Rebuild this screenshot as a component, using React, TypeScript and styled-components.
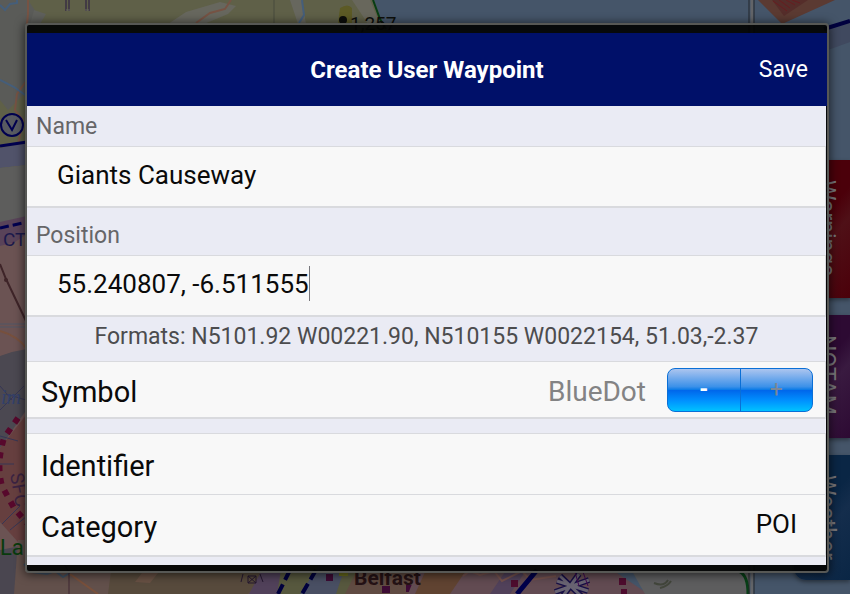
import React, { useState } from "react";
import styled, { createGlobalStyle } from "styled-components";

const GlobalStyle = createGlobalStyle`
  * { box-sizing: border-box; }
  body { margin: 0; background: #455569; font-family: Roboto, "Liberation Sans", sans-serif; color: #0a0a0a; }
  button, input, select { font: inherit; color: inherit; margin: 0; }
`;

const Page = styled.main`
  position: relative;
  min-height: 100vh;
  padding: 23px 21px 21px 25px;
  overflow: hidden;
`;

const MapCanvas = styled.svg`
  position: absolute;
  inset: 0;
  width: 100%;
  height: 100%;
`;

const SideTabs = styled.nav`
  position: absolute;
  top: 160px;
  right: 0;
  display: flex;
  flex-direction: column;
  gap: 17px;
`;

const SideTab = styled.button<{ $tone: string; $edge: string; $height: number }>`
  width: 56px;
  height: ${(p) => p.$height}px;
  padding: 20px 12px 0 0;
  border: 0;
  border-radius: 12px 0 0 12px;
  display: flex;
  justify-content: flex-end;
  align-items: flex-start;
  background: linear-gradient(130deg, ${(p) => p.$edge} 45%, ${(p) => p.$tone} 60%, ${(p) => p.$edge} 100%);
  box-shadow: 0 2px 4px rgba(0, 0, 0, 0.4);
  color: #77767a;
  font-size: 23px;
  line-height: 24px;
`;

const SideLabel = styled.span`
  writing-mode: vertical-rl;
`;

const Dialog = styled.form`
  position: relative;
  display: flex;
  flex-direction: column;
  padding: 8px 0 6px;
  border: 2px solid #575855;
  border-radius: 4px;
  background: rgba(3, 4, 4, 0.94);
  box-shadow: 0 1px 10px 1px rgba(0, 0, 0, 0.6);
`;

const Header = styled.header`
  display: grid;
  grid-template-columns: 1fr auto 1fr;
  align-items: center;
  height: 73px;
  padding: 0 19px;
  background: #001069;
  color: #ffffff;
`;

const Title = styled.h1`
  grid-column: 2;
  margin: 0;
  font-size: 24px;
  line-height: 32px;
  font-weight: 700;
`;

const SaveButton = styled.button`
  justify-self: end;
  padding: 0;
  border: 0;
  background: none;
  font-size: 23px;
  line-height: 32px;
`;

const Body = styled.div`
  margin-right: 1px;
  padding-bottom: 8px;
  background: #eaebf4;
`;

const SectionLabel = styled.label<{ $height: number }>`
  display: flex;
  align-items: flex-end;
  height: ${(p) => p.$height}px;
  padding: 0 9px 5px;
  color: #666668;
  font-size: 23px;
  line-height: 28px;
`;

const Row = styled.div<{ $height: number; $inset?: number; $joined?: boolean }>`
  display: flex;
  align-items: center;
  height: ${(p) => p.$height}px;
  padding: 0 12px 0 ${(p) => p.$inset ?? 14}px;
  border: solid #d9dade;
  border-width: 1px 1px ${(p) => (p.$joined ? 1 : 2)}px 0;
  background: #f8f8f8;

  & + & {
    border-top: 0;
  }
`;

const TextInput = styled.input<{ $fit?: boolean }>`
  ${(p) => (p.$fit ? "field-sizing: content;" : "flex: 1; min-width: 0;")}
  padding: 0 0 4px;
  border: 0;
  outline: 0;
  background: none;
  font-size: 26px;
  line-height: 34px;
`;

const Caret = styled.span`
  width: 1px;
  height: 35px;
  margin-bottom: 5px;
  background: #77777c;
`;

const Hint = styled.p`
  margin: 0;
  padding: 6px 0 10px;
  text-align: center;
  color: #4c4c4e;
  font-size: 23px;
  line-height: 28px;
`;

const RowLabel = styled.label`
  padding-top: 4px;
  font-size: 29px;
  line-height: 36px;
`;

const SymbolName = styled.output`
  margin-left: auto;
  margin-right: 21px;
  padding-top: 4px;
  color: #838384;
  font-size: 28px;
  line-height: 36px;
`;

const Stepper = styled.div`
  display: flex;
  width: 146px;
  height: 44px;
  border: 1px solid #0a6fd6;
  border-radius: 8px;
  overflow: hidden;
  background: linear-gradient(#acc5ef 0%, #3c91e9 42%, #0679e7 50%, #0067eb 51%, #0092ff 76%, #00c2ff 100%);
`;

const StepButton = styled.button<{ $dim?: boolean }>`
  flex: 1;
  padding: 0;
  border: 0;
  background: none;
  color: ${(p) => (p.$dim ? "#7b8898" : "#ffffff")};
  font-size: 23px;
  font-weight: ${(p) => (p.$dim ? 400 : 700)};
  line-height: 40px;

  & + & {
    border-left: 1px solid #0a6fd6;
  }
`;

const Spacer = styled.div`
  height: 14px;
`;

const CategorySelect = styled.select`
  appearance: none;
  field-sizing: content;
  margin-left: auto;
  padding: 0 16px 2px 0;
  border: 0;
  outline: 0;
  background: none;
  text-align-last: right;
  font-size: 26px;
  line-height: 34px;
`;

function Chart() {
  return (
    <MapCanvas viewBox="0 0 850 594" preserveAspectRatio="xMidYMid slice" aria-hidden="true">
      <rect width="850" height="594" fill="#455569" />
      <path d="M0 0H374L382 22 400 60V240H0z" fill="#5f6048" />
      <path d="M0 0H28L36 12 34 40 28 90 8 110 0 100z" fill="#5a5b58" />
      <path d="M34 10l12 4-6 10H30z" fill="#5f605c" />
      <path d="M168 24l18-12 34-10 16 4-8 8-24 10zM290 0h12l4 24h-8z" fill="#67675e" />
      <path d="M352 0h18l10 24h-12z" fill="#68675c" />
      <path d="M340 8q8-5 12 0v15h-14z" fill="#5c5a25" />
      <path d="M373 0l7 19 6 10" fill="none" stroke="#083d14" strokeWidth="2" />
      <path d="M28 0v14l-1 10M196 23l14-10 15-4 6-9M27 80l-10 14-2 16 8 10-6 30M10 155l18-6M12 155l12 34v40" fill="none" stroke="#765344" strokeWidth="2" />
      <path d="M0 5l5 5 5-6 7-1V0M302 0l2 15-5 8M0 80l14 7 14 10M0 214l14-4 8 4h6" fill="none" stroke="#455e7a" strokeWidth="2" />
      <path d="M66 0v11M86 0v11M69 0v11M89 0v11" stroke="#261640" strokeWidth="1" />
      <path d="M66 10h4M85 10h4" stroke="#67675e" />
      <path d="M274 0v24" stroke="#484a3c" />

      <path d="M0 148l27-5v22l-27 3z" fill="#51536a" />
      <path d="M0 168l27-3v58l-27 5z" fill="#5d5d5c" />
      <path d="M0 228l27-6v350H0z" fill="#6b5353" />
      <path d="M0 222l27-6v18l-12 8-15 4z" fill="#594359" />
      <circle cx="12" cy="125" r="11" fill="#585a61" stroke="#00004f" strokeWidth="2" />
      <path d="M6 120l6 10 5-10" fill="none" stroke="#00004f" strokeWidth="2" />
      <path d="M0 146l27-4" stroke="#00004f" strokeWidth="3" />
      <path d="M0 228l27-6" stroke="#00004f" strokeWidth="3" strokeDasharray="9 4" />
      <text x="3" y="246" fontFamily="Roboto, sans-serif" fontSize="19" fill="#1b194c">CT</text>
      <path d="M0 264l6 15 21 44" fill="none" stroke="#3e2428" strokeWidth="2" />
      <circle cx="6" cy="280" r="2" fill="#3e2428" />
      <path d="M0 324h27M0 327h27" stroke="#505767" />
      <path d="M0 331q18 5 27 18" fill="none" stroke="#77503d" strokeWidth="2" />
      <path d="M0 356l12-4 15-3v60L0 448z" fill="#4b4851" />
      <path d="M0 448l27-34v138l-27-30z" fill="#663f3f" />
      <path d="M0 410l24-24M0 386l12 14M6 394l20 6M0 436l18 5M0 464h14M2 524l18-18M10 530l17-14" stroke="#363654" />
      <text x="1" y="404" fontFamily="Liberation Serif, serif" fontStyle="italic" fontSize="20" fill="#32406a">im</text>
      <path d="M18 418L4 438Q-4 464 2 486L14 508 28 524" fill="none" stroke="#57082c" strokeWidth="6" strokeDasharray="6 7" />
      <text transform="translate(10 474) rotate(80)" fontFamily="Roboto, sans-serif" fontSize="19" fill="#3b2342">SFC</text>

      <path d="M0 550l20-4v48H0z" fill="#4a4650" />
      <path d="M18 540H280V594H14z" fill="#62504b" />
      <text x="0" y="555" fontFamily="Roboto, sans-serif" fontSize="22" fill="#083b0d">La</text>
      <path d="M112 564H280L248 594H108z" fill="#574a3c" />
      <path d="M145 569l13 4-8 10-15-1z" fill="#685144" />
      <path d="M24 564l8 8 15 2 8-3 8 6 8-5" fill="none" stroke="#405163" strokeWidth="2" />
      <path d="M64 564l5 8v22" fill="none" stroke="#3e2733" />
      <path d="M70 574l28 20" stroke="#79503b" strokeWidth="2" />
      <path d="M280 564H425V594H265z" fill="#57583e" />
      <path d="M262 570l20-6-5 30h-28z" fill="#51415a" />
      <path d="M300 594l20-30h26l-10 30z" fill="#494f63" />
      <path d="M345 594l12-24h68v24z" fill="#604b42" />
      <path d="M243 574l-2 8M260 574l3 8M248 576h8v7h-8zM248 576l8 7M256 576l-8 7" fill="none" stroke="#25172f" />
      <path d="M290 570l-12 24M316 570l-14 24" stroke="#00003d" strokeWidth="4" strokeDasharray="11 5" />
      <path d="M326 574h7v7h-7zM382 586h8v7h-8zM406 585h8v7h-8z" fill="#3d0b34" />
      <path d="M339 569h9v7h-9z" fill="#686a1c" />
      <path d="M420 564H604L648 594H408z" fill="#624b52" />
      <path d="M425 572h40l-15 22h-35z" fill="#604331" />
      <path d="M505 572h20l-15 22h-20z" fill="#51415a" />
      <path d="M463 576l7-5 10 4 14-4 8 10 20-10 8 9 26-4" fill="none" stroke="#75524d" strokeWidth="2" />
      <path d="M537 570l-20 24M688 570l-10 24" stroke="#00004b" strokeWidth="5" />
      <path d="M511 580h7v7h-7zM619 578h7v7h-7zM621 589h6v5h-6z" fill="#4e0c2e" />
      <g fill="none">
        <path d="M560 576l21 20M557 581l31 10M555 592l34-12M579 574l-16 22" stroke="#170f45" strokeWidth="6" />
        <path d="M560 576l21 20M557 581l31 10M555 592l34-12M579 574l-16 22" stroke="#686372" strokeWidth="3" />
        <path d="M575 572l4 14M583 572l5 14" stroke="#430951" />
      </g>
      <path d="M628 564H750V594H645z" fill="#5d5d5e" />
      <path d="M654 583q10 4 14-3M660 588q8-2 11-7" fill="none" stroke="#42463b" strokeWidth="2" />
      <path d="M740 572q8 4 8 22" fill="none" stroke="#083f17" strokeWidth="3" />
      <text x="354" y="585" fontFamily="Roboto, sans-serif" fontSize="21" fontWeight="700" fill="#251215">Belfast</text>

      <path d="M752 0V594" stroke="#626468" strokeWidth="3" />
      <path d="M749 0V594M754 0V594" stroke="#22262c" />
      <path d="M758 0H835L782 24z" fill="#5b3a32" />
      <path d="M772 0h36l-24 16z" fill="#552d2a" />
      <path d="M773 1l14 10M779 0l11 8M786 0l9 5M792 0l8 3" stroke="#681d20" />
      <path d="M828 28l22-7v21l-22 8z" fill="#40495f" />
      <path d="M824 29l26-8" stroke="#00003f" strokeWidth="4" />
      <circle cx="343" cy="20" r="4" fill="#0c0d0a" />
      <text x="350" y="30" fontFamily="Roboto, sans-serif" fontSize="19" fill="#0e100c">1,257</text>
    </MapCanvas>
  );
}

const symbols = ["BlueDot", "RedDot", "GreenDot"];

export default function App() {
  const [name, setName] = useState("Giants Causeway");
  const [position, setPosition] = useState("55.240807, -6.511555");
  const [identifier, setIdentifier] = useState("");
  const [symbol, setSymbol] = useState(0);

  const step = (by: number) =>
    setSymbol((current) => (current + by + symbols.length) % symbols.length);

  return (
    <>
      <GlobalStyle />
      <Page>
        <Chart />
        <SideTabs>
          <SideTab type="button" $height={138} $edge="#4b000a" $tone="#4f1017">
            <SideLabel>Warnings</SideLabel>
          </SideTab>
          <SideTab type="button" $height={123} $edge="#2d0a33" $tone="#391a40">
            <SideLabel>NOTAM</SideLabel>
          </SideTab>
          <SideTab type="button" $height={125} $edge="#0a2645" $tone="#142d4c">
            <SideLabel>Weather</SideLabel>
          </SideTab>
        </SideTabs>
        <Dialog onSubmit={(e) => e.preventDefault()}>
          <Header>
            <Title>Create User Waypoint</Title>
            <SaveButton type="submit">Save</SaveButton>
          </Header>
          <Body>
            <SectionLabel $height={40} htmlFor="name">Name</SectionLabel>
            <Row $height={62} $inset={30}>
              <TextInput id="name" value={name} onChange={(e) => setName(e.target.value)} />
            </Row>
            <SectionLabel $height={47} htmlFor="position">Position</SectionLabel>
            <Row $height={62} $inset={30}>
              <TextInput $fit id="position" value={position} onChange={(e) => setPosition(e.target.value)} />
              <Caret />
            </Row>
            <Hint>Formats: N5101.92 W00221.90, N510155 W0022154, 51.03,-2.37</Hint>
            <Row $height={58}>
              <RowLabel htmlFor="symbol">Symbol</RowLabel>
              <SymbolName id="symbol">{symbols[symbol]}</SymbolName>
              <Stepper>
                <StepButton type="button" aria-label="Previous symbol" onClick={() => step(-1)}>-</StepButton>
                <StepButton type="button" aria-label="Next symbol" $dim onClick={() => step(1)}>+</StepButton>
              </Stepper>
            </Row>
            <Spacer />
            <Row $height={62} $joined>
              <RowLabel htmlFor="identifier">Identifier</RowLabel>
              <TextInput id="identifier" value={identifier} onChange={(e) => setIdentifier(e.target.value)} />
            </Row>
            <Row $height={62}>
              <RowLabel htmlFor="category">Category</RowLabel>
              <CategorySelect id="category" defaultValue="POI">
                <option>POI</option>
              </CategorySelect>
            </Row>
          </Body>
        </Dialog>
      </Page>
    </>
  );
}
